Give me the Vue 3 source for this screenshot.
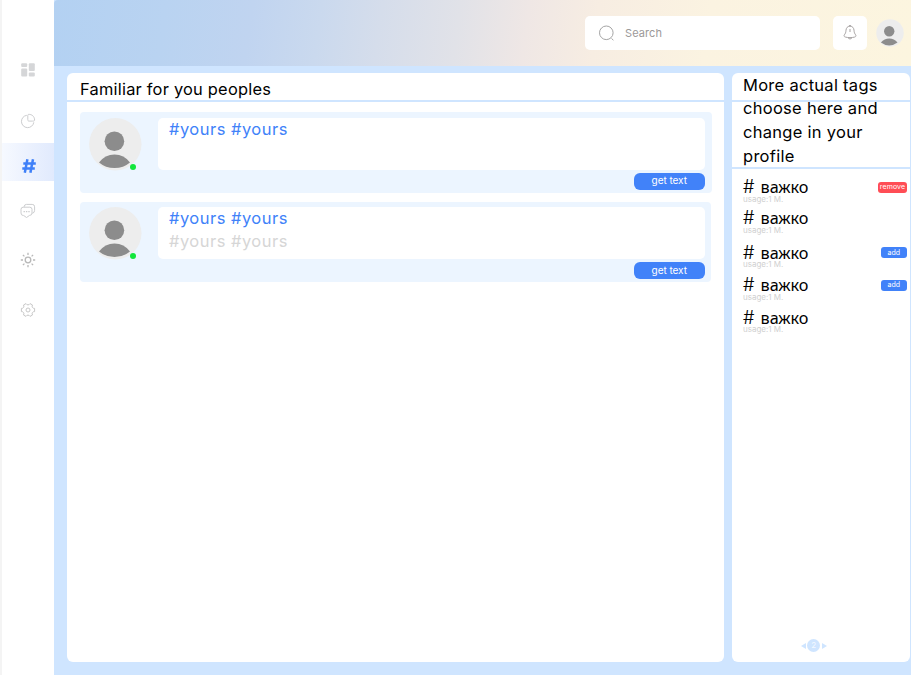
<script setup>
const people = [
  { id: 1, lines: [{ text: '#yours #yours', muted: false }] },
  { id: 2, lines: [{ text: '#yours #yours', muted: false }, { text: '#yours #yours', muted: true }] },
]
const tags = [
  { id: 1, action: 'remove' },
  { id: 2, action: '' },
  { id: 3, action: 'add' },
  { id: 4, action: 'add' },
  { id: 5, action: '' },
]
</script>

<template>
  <div class="page">
    <nav class="sidebar">
      <a class="item dash">
        <svg width="14" height="14" viewBox="0 0 14 14" fill="#d5d6d8">
          <rect x="0.2" y="0.3" width="6" height="3.8" rx="1" /><rect x="0.2" y="5.6" width="6" height="8" rx="1" />
          <rect x="7.8" y="0.3" width="6" height="7.6" rx="1" /><rect x="7.8" y="9.4" width="6" height="4.2" rx="1" />
        </svg>
      </a>
      <a class="item pie">
        <svg width="16" height="16" viewBox="0 0 16 16" fill="none" stroke="#cccdcf" stroke-width="1">
          <path d="M6.8 2.3A6.2 6.2 0 1 0 13.8 9.3" />
          <path d="M8.6 1.4C11.8 1.2 14.6 3.3 14.6 7.2 14.4 8.1 13.6 8.1 12.6 8.1H9.2C8 8.1 7.8 7.6 7.8 6.6V2.6C7.8 1.8 8 1.5 8.6 1.4Z" />
        </svg>
      </a>
      <a class="item active">
        <svg width="14" height="14" viewBox="0 0 14 14" fill="none" stroke="#3f80f8" stroke-width="2.5">
          <path d="M5.4 .3 2.8 13.7M11 .3 8.4 13.7M1.3 4.6H13.8M.3 9.4H12.8" />
        </svg>
      </a>
      <a class="item chat">
        <svg width="16" height="16" viewBox="0 0 16 16" fill="none" stroke="#cccdcf" stroke-width="1">
          <path d="M4.2 4.2V3.6Q4.4 1.4 6.4 1.4H12.2Q14.6 1.4 14.6 3.8V7.4Q14.6 9.8 12.3 10.3" />
          <path d="M3.2 4.2H9.8Q12 4.2 12 6.4V10Q12 12.4 9.6 12.4L6.5 14.5 3.7 12.5H3.2Q1 12.4 1 10V6.4Q1 4.2 3.2 4.2Z" />
          <path d="M3.5 8.7H4.9M5.9 8.7H7.3M8.3 8.7H9.7" stroke-width="1.3" />
        </svg>
      </a>
      <a class="item sun">
        <svg width="16" height="16" viewBox="0 0 16 16" fill="none" stroke="#b8b8b8" stroke-width="1.3">
          <circle cx="8" cy="8" r="2.8" />
          <path d="M8 .8V3M8 13V15.2M.8 8H3M13 8H15.2M2.9 2.9 4.4 4.4M11.6 11.6 13.1 13.1M13.1 2.9 11.6 4.4M4.4 11.6 2.9 13.1" />
        </svg>
      </a>
      <a class="item gear">
        <svg width="16" height="16" viewBox="0 0 16 16" fill="none" stroke="#c8c8c8" stroke-width="1" stroke-linejoin="round">
          <circle cx="8" cy="8" r="2" />
          <path d="M8 2.9Q9.3 2.9 10 1.6L12.5 3Q11.7 4.2 12.4 5.4Q13 6.500 14.6 6.4V9.6Q13 9.500 12.4 10.6Q11.7 11.8 12.5 13L10 14.4Q9.3 13.1 8 13.1T6 14.4L3.5 13Q4.3 11.8 3.6 10.6Q3 9.500 1.4 9.6V6.4Q3 6.500 3.6 5.4Q4.3 4.2 3.5 3L6 1.6Q6.7 2.9 8 2.9Z" />
        </svg>
      </a>
    </nav>

    <div class="main">
      <header class="topbar">
        <div class="search">
          <svg width="17" height="17" viewBox="0 0 17 17" fill="none" stroke="#a4a4a4" stroke-width="1">
            <circle cx="8.3" cy="7.8" r="6.8" /><path d="M13.5 13.5 15.4 15.2" />
          </svg>
          <span>Search</span>
        </div>
        <div class="bell">
          <svg width="16" height="18" viewBox="0 0 16 18" fill="none" stroke="#a8a4a4" stroke-width="1">
            <path d="M8 2.2C5.4 2.2 4.2 4 4 6.2 3.8 8.5 3.5 9.4 2.4 10.8 1.6 12 2.2 12.7 3.5 13.1 6.2 13.8 9.8 13.8 12.5 13.1 13.8 12.7 14.4 12 13.6 10.8 12.5 9.4 12.2 8.5 12 6.2 11.8 4 10.6 2.2 8 2.2Z" />
            <path d="M6 13.8Q8 16.5 10 13.8M8 5V8M6.9 1.9Q8 .9 9.1 1.9" />
          </svg>
        </div>
        <svg class="me" viewBox="0 0 54 54">
          <circle cx="27" cy="27" r="26.5" fill="#ededed" />
          <circle cx="25.5" cy="23.7" r="10" fill="#8c8c8c" />
          <path d="M9.5 45.5Q16 37.5 25.5 37.5Q35 37.5 41.5 45.5Q34.5 51 25.5 51Q16.5 51 9.5 45.5Z" fill="#8c8c8c" />
        </svg>
      </header>

      <div class="content">
        <section class="panel people">
          <h2>Familiar for you peoples</h2>
          <article v-for="p in people" :key="p.id" class="card">
            <div class="avatar">
              <svg width="53" height="53" viewBox="0 0 53 53">
                <circle cx="26.3" cy="26.3" r="26.2" fill="#ededed" />
                <circle cx="25.4" cy="23.2" r="9.8" fill="#8c8c8c" />
                <path d="M10 44.5Q16 36.5 25.5 36.5Q35 36.5 41 44.5Q34.5 50 25.5 50Q16.5 50 10 44.5Z" fill="#8c8c8c" />
              </svg>
              <i class="online"></i>
            </div>
            <div class="body">
              <div class="box">
                <p v-for="(l, i) in p.lines" :key="i" :class="{ muted: l.muted }">{{ l.text }}</p>
              </div>
              <button class="get">get text</button>
            </div>
          </article>
        </section>

        <aside class="panel tags">
          <div class="intro">
            <i class="rule"></i>
            <p>More actual tags<br />choose here and<br />change in your<br />profile</p>
          </div>
          <ul>
            <li v-for="t in tags" :key="t.id">
              <div class="tag">
                <div class="name"><b>#</b><span>важко</span></div>
                <div class="usage">usage:1 M.</div>
              </div>
              <button v-if="t.action" :class="t.action">{{ t.action }}</button>
            </li>
          </ul>
          <div class="pager">
            <svg width="5" height="6" viewBox="0 0 5 6"><path d="M5 0V6L0 3Z" fill="#cfe5ff" /></svg>
            <b>2</b>
            <svg width="5" height="6" viewBox="0 0 5 6"><path d="M0 0V6L5 3Z" fill="#cfe5ff" /></svg>
          </div>
        </aside>
      </div>
    </div>
  </div>
</template>

<style>
body { overflow: hidden; background: #fff; }
</style>

<style scoped>
* { box-sizing: border-box; }
h2, p, ul { margin: 0; padding: 0; font-weight: 400; }
button { border: 0; padding: 0; color: #fff; font-family: inherit; }
.page { display: flex; width: 911px; height: 675px; font-family: Inter, "Noto Sans", sans-serif; color: #000; }
.sidebar { width: 54px; flex: none; border-left: 2px solid #f4f4f4; background: #fff; padding-top: 50px; display: flex; flex-direction: column; }
.item { display: flex; align-items: center; justify-content: center; }
.dash { height: 39px; }
.pie { height: 54px; padding-top: 10px; }
.active { height: 38px; padding-top: 7px; padding-left: 1px; background: linear-gradient(90deg, #f6f9ff, #e1eafd); }
.chat { height: 60px; }
.sun { height: 38px; padding-bottom: 1px; }
.gear { height: 63px; padding-bottom: 1px; }
.main { flex: 1; min-width: 0; background: #cfe5ff; }
.topbar { height: 66px; border-top-left-radius: 4px; display: flex; align-items: center; justify-content: flex-end; padding-right: 7px; background: linear-gradient(98deg, #b3d1f2 0%, #b9d3f1 13%, #c0d4f0 23%, #cad9ee 31%, #d5ddeb 38%, #e1e2e8 47%, #efe7e5 55%, #f7ede2 63%, #fbf3e1 76%, #fcf5df 100%); }
.search { width: 235px; height: 34px; border-radius: 5px; background: #fff; display: flex; align-items: center; gap: 10px; padding-left: 13px; color: #9c9999; font-size: 11px; letter-spacing: 0.1px; }
.bell { width: 34px; height: 34px; border-radius: 5px; background: #fff; margin-left: 13px; display: flex; align-items: center; justify-content: center; }
.me { width: 28px; height: 28px; margin-left: 9px; }
.content { display: flex; padding: 6.5px 1.5px 0 13px; gap: 8px; }
.panel { background: #fff; border-radius: 6px; height: 589px; }
.people { width: 657px; }
.people h2 { height: 29.5px; border-bottom: 2px solid #cfe5ff; padding: 4px 0 0 13px; font-size: 16.4px; line-height: 24px; letter-spacing: 0.23px; margin-bottom: 10px; }
.card { width: 632px; height: 81px; margin: 0 0 8.5px 13px; border-radius: 4px; background: #ecf5ff; display: flex; padding: 5.5px 7.5px 0 9px; }
.card + .card { width: 631px; height: 80px; padding-right: 6.5px; }
.avatar { position: relative; width: 69px; flex: none; }
.avatar svg { display: block; }
.online { position: absolute; left: 40.5px; top: 46.3px; width: 6px; height: 6px; border-radius: 50%; background: #12e63c; }
.body { flex: 1; display: flex; flex-direction: column; align-items: flex-end; gap: 3px; }
.box { width: 100%; height: 52px; border-radius: 5px; background: #fff; padding-left: 11px; color: #4182f9; font-size: 16.5px; line-height: 23px; }
.box p { letter-spacing: 0.48px; }
.box .muted { color: #d6d6d6; }
.get { width: 70.5px; height: 17px; border-radius: 6px; background: #4182f9; font-size: 10px; line-height: 15px; padding-bottom: 1px; letter-spacing: -0.05px; }
.tags { width: 177.5px; position: relative; display: flex; flex-direction: column; }
.intro { position: relative; height: 96px; border-bottom: 2px solid #cfe5ff; padding: 1px 0 0 11px; font-size: 16.5px; line-height: 23.8px; letter-spacing: 0.28px; }
.rule { position: absolute; left: 0; right: 0; top: 27.5px; height: 2px; background: #cfe5ff; }
.intro p { position: relative; }
ul { list-style: none; display: grid; grid-template-rows: 31px 34.5px 32.5px 32.5px 32px; padding: 9px 0 0 11px; }
li { display: flex; justify-content: space-between; }
.tag { margin-top: -0.5px; }
.name { display: flex; height: 16.5px; font-family: "Noto Sans", sans-serif; font-size: 16.2px; line-height: 20px; white-space: nowrap; }
.name b { width: 17.5px; font-family: Inter, sans-serif; font-size: 18px; font-weight: 300; -webkit-text-stroke: 0.1px #000; }
.usage { font-size: 8px; line-height: 11px; color: #d0d0d0; }
li button { font-size: 7px; line-height: 10px; height: 11px; border-radius: 3px; margin-top: 4px; }
.add { width: 25.5px; background: #4182f9; margin-right: 3px; }
.remove { width: 29px; background: #ff4d55; margin-right: 2.5px; letter-spacing: 0.1px; }
.pager { margin: auto auto 9.5px; padding-right: 14px; display: flex; align-items: center; gap: 1.5px; }
.pager b { width: 13px; height: 13px; border-radius: 50%; background: #cfe5ff; color: #f4f9ff; font-size: 8px; font-weight: 400; line-height: 13px; text-align: center; }
</style>
